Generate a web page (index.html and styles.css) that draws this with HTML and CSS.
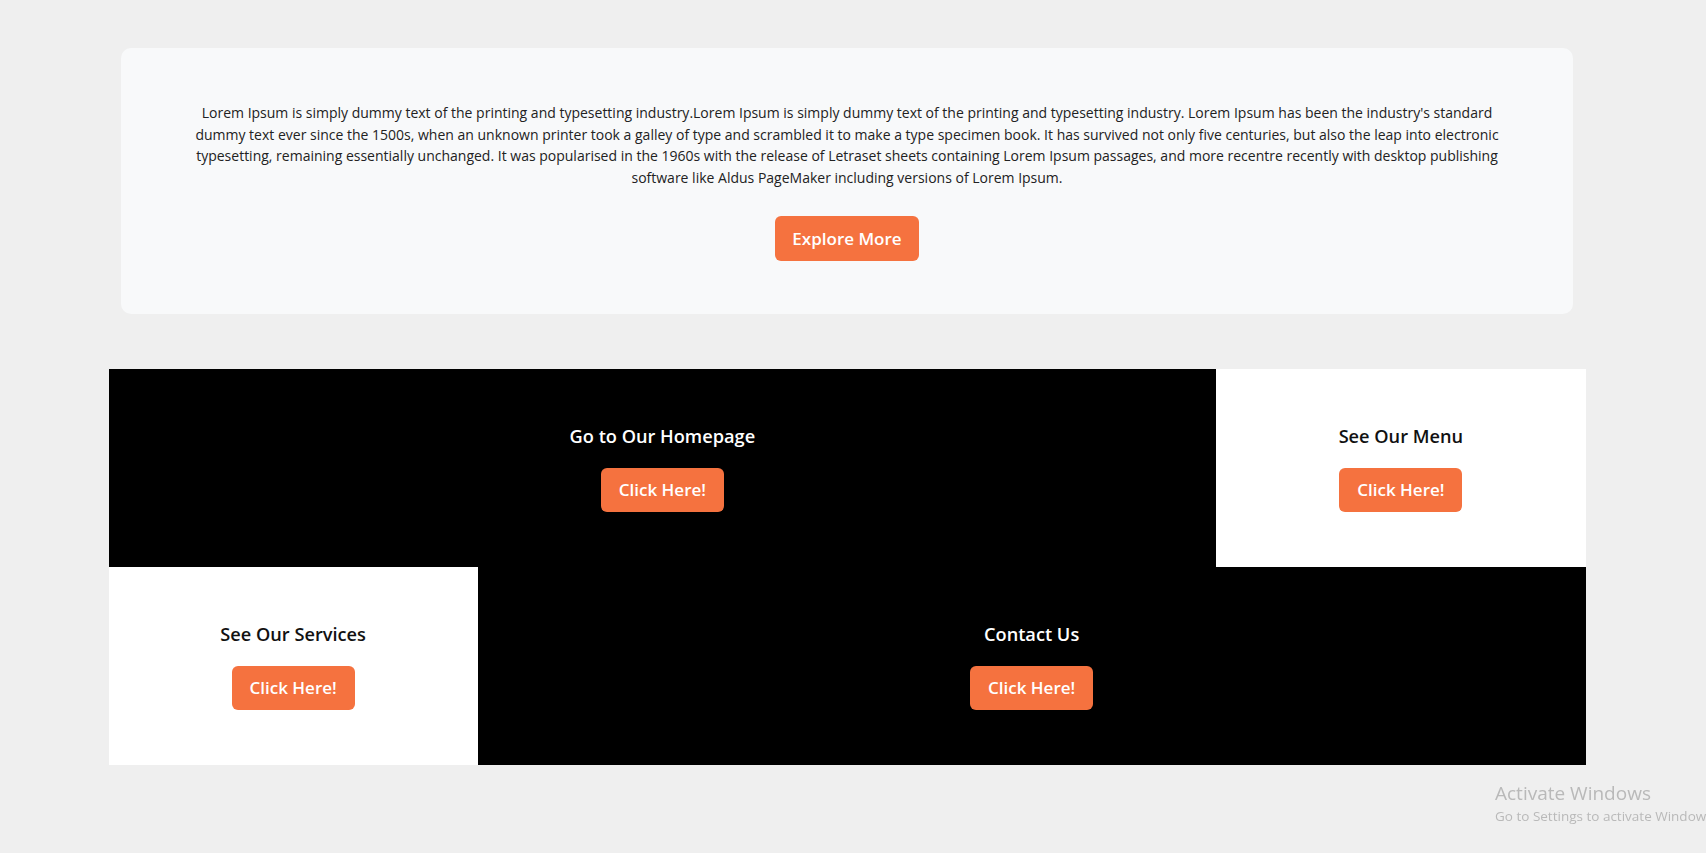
FILE: index.html
```html
<!DOCTYPE html>
<html lang="en">
<head>
<meta charset="utf-8">
<title>Lorem Ipsum</title>
<link rel="stylesheet" href="styles.css">
</head>
<body>
<div class="page">
  <section class="intro">
    <p class="intro-text">Lorem Ipsum is simply dummy text of the printing and typesetting industry.Lorem Ipsum is simply dummy text of the printing and typesetting industry. Lorem Ipsum has been the industry's standard dummy text ever since the 1500s, when an unknown printer took a galley of type and scrambled it to make a type specimen book. It has survived not only five centuries, but also the leap into electronic typesetting, remaining essentially unchanged. It was popularised in the 1960s with the release of Letraset sheets containing Lorem Ipsum passages, and more recentre recently with desktop publishing software like Aldus PageMaker including versions of Lorem Ipsum.</p>
    <a class="btn btn-lg" href="#">Explore More</a>
  </section>

  <section class="tiles">
    <div class="tile tile-dark tile-wide">
      <h3 class="tile-title">Go to Our Homepage</h3>
      <a class="btn" href="#">Click Here!</a>
    </div>
    <div class="tile tile-light">
      <h3 class="tile-title">See Our Menu</h3>
      <a class="btn" href="#">Click Here!</a>
    </div>
    <div class="tile tile-light">
      <h3 class="tile-title">See Our Services</h3>
      <a class="btn" href="#">Click Here!</a>
    </div>
    <div class="tile tile-dark tile-wide">
      <h3 class="tile-title">Contact Us</h3>
      <a class="btn" href="#">Click Here!</a>
    </div>
  </section>
</div>

<div class="watermark">
  <div class="wm-title">Activate Windows</div>
  <div class="wm-sub">Go to Settings to activate Windows.</div>
</div>
</body>
</html>
```

FILE: styles.css
```css
html, body {
  margin: 0;
  padding: 0;
}

body {
  background: #efefef;
  font-family: "Open Sans", "Noto Sans", "Liberation Sans", sans-serif;
  color: #212529;
  overflow: hidden;
  height: 853px;
}

.page {
  width: 1694px;
  padding-top: 48px;
}

.intro {
  width: 1452px;
  margin: 0 auto;
  box-sizing: border-box;
  background: #f8f9fa;
  border-radius: 10px;
  padding: 54px 40px 53px;
  display: flex;
  flex-direction: column;
  align-items: center;
}

.intro-text {
  margin: 0 0 27px;
  max-width: 1332px;
  text-align: center;
  font-size: 14px;
  line-height: 21.7px;
  color: #222;
}

.btn {
  display: inline-flex;
  align-items: center;
  justify-content: center;
  background: #f5723f;
  color: #fff;
  text-decoration: none;
  font-weight: 600;
  font-size: 17px;
  border-radius: 6px;
  height: 44px;
  padding: 0 18px;
  box-sizing: border-box;
}

.btn-lg {
  height: 45px;
  padding: 0 17px;
  font-size: 17px;
}

.tiles {
  width: 1477px;
  margin: 55px auto 0;
  display: grid;
  grid-template-columns: repeat(4, 1fr);
  grid-auto-rows: 198px;
}

.tile {
  display: flex;
  flex-direction: column;
  align-items: center;
  justify-content: center;
}

.tile-wide {
  grid-column: span 3;
}

.tile-dark {
  background: #000;
  color: #fff;
}

.tile-light {
  background: #fff;
  color: #111;
}

.tile-title {
  margin: 0 0 19px;
  font-size: 18.2px;
  line-height: 25px;
  font-weight: 600;
}

.watermark {
  position: fixed;
  left: 1495px;
  top: 780px;
  color: #b9b9b9;
  white-space: nowrap;
  font-family: "Open Sans", "Noto Sans", sans-serif;
}

.wm-title {
  font-size: 19px;
  line-height: 26px;
}

.wm-sub {
  font-size: 13.5px;
  line-height: 20px;
}
```
